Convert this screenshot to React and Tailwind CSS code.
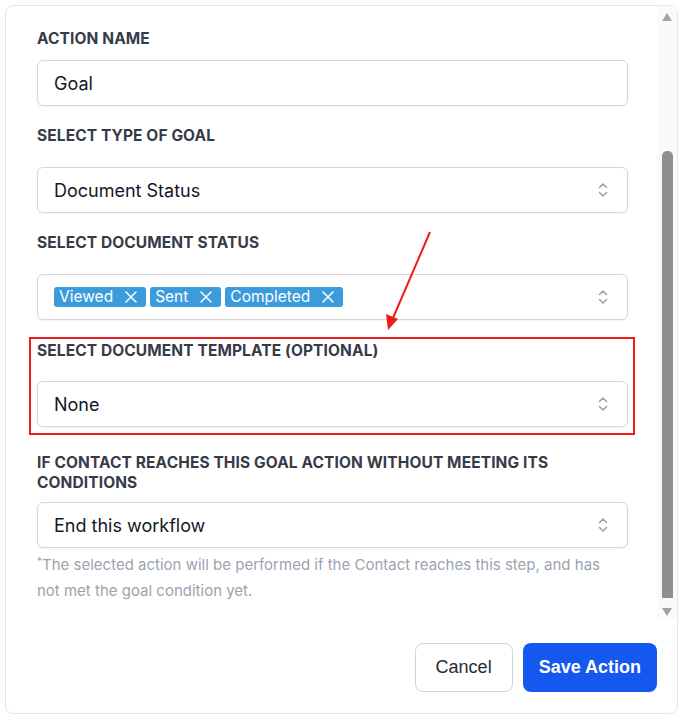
import React from "react";

function Chevrons() {
  return (
    <svg width="12" height="18" viewBox="0 0 12 18" fill="none" stroke="#9ca3af" strokeWidth="1.6" strokeLinecap="round" strokeLinejoin="round">
      <path d="M2.5 6.5 L6 3 L9.5 6.5" />
      <path d="M2.5 11.5 L6 15 L9.5 11.5" />
    </svg>
  );
}

function Label({ children, gap = "mb-[11px]" }) {
  return (
    <div className={`text-[15.5px] leading-[20px] font-bold uppercase text-[#353c48] tracking-[0.1px] ${gap}`}>
      {children}
    </div>
  );
}

function Select({ children }) {
  return (
    <div className="h-[46px] w-full flex items-center justify-between pl-4 pr-[18px] border border-[#d4d7dc] rounded-md bg-white shadow-[0_1px_2px_rgba(0,0,0,0.05)]">
      <div className="flex items-center gap-[4px] text-[18px] text-[#111827]">{children}</div>
      <Chevrons />
    </div>
  );
}

function Tag({ children }) {
  return (
    <span className="flex items-center h-[20px] pl-[5px] pr-[9px] gap-[12px] rounded-[3px] bg-[#3b9bdb] text-white text-[15.5px] leading-none">
      {children}
      <svg width="12" height="12" viewBox="0 0 12 12" stroke="white" strokeWidth="1.5" strokeLinecap="round">
        <path d="M1 1 L11 11 M11 1 L1 11" />
      </svg>
    </span>
  );
}

export default function App() {
  return (
    <div className="w-[685px] h-[719px] bg-white p-[5px] pr-[7px]" style={{ fontFamily: "Inter, 'Liberation Sans', sans-serif" }}>
      <div className="h-full flex flex-col border border-[#e5e7eb] rounded-lg">
        <div className="flex h-[614px]">
          <div className="flex-1 pl-[31px] pr-[29px] pt-[23px] overflow-hidden">
            <Label>Action name</Label>
            <div className="h-[46px] w-full flex items-center px-4 border border-[#d4d7dc] rounded-md shadow-[0_1px_2px_rgba(0,0,0,0.05)] text-[18px] text-[#111827] mb-[20px]">
              Goal
            </div>

            <Label gap="mb-[21px]">Select type of goal</Label>
            <div className="mb-[20px]">
              <Select>Document Status</Select>
            </div>

            <Label gap="mb-[21px]">Select document status</Label>
            <div className="mb-[21px]">
              <Select>
                <Tag>Viewed</Tag>
                <Tag>Sent</Tag>
                <Tag>Completed</Tag>
              </Select>
            </div>

            <div className="relative mb-[26px]">
              <Label gap="mb-[20px]">Select document template (optional)</Label>
              <Select>None</Select>
              <div className="absolute left-[-8px] right-[-7px] top-[-4px] bottom-[-8px] border-2 border-[#ee1c1c]"></div>
              <svg className="absolute left-[313px] top-[-113px]" width="100" height="110" viewBox="0 0 100 110">
                <line x1="80" y1="4" x2="43" y2="90" stroke="#ee1c1c" strokeWidth="2" />
                <polygon points="38,102 36,86 48,91" fill="#ee1c1c" />
              </svg>
            </div>

            <div className="text-[15.5px] leading-[19.5px] font-bold uppercase text-[#353c48] tracking-[0.1px] mb-[10px] pr-10">
              If contact reaches this goal action without meeting its conditions
            </div>
            <Select>End this workflow</Select>
            <p className="text-[15px] leading-[26px] text-[#9ca3af] mt-[4px] pr-[20px]">
              <span className="text-[10px] align-top leading-[18px]">*</span>The selected action will be performed if the Contact reaches this step, and has not met the goal condition yet.
            </p>
          </div>
          <div className="w-[20px] flex flex-col items-center bg-[#fafafa]">
            <svg className="mt-[7px]" width="10" height="8" viewBox="0 0 10 8">
              <polygon points="5,0 10,8 0,8" fill="#a3a3a3" />
            </svg>
            <div className="flex-1 w-full flex flex-col items-center pt-[130px] pb-[10px]">
              <div className="w-[11px] flex-1 bg-[#8f8f8f] rounded-t-[5px]"></div>
            </div>
            <svg className="mb-[4px]" width="10" height="8" viewBox="0 0 10 8">
              <polygon points="0,0 10,0 5,8" fill="#a3a3a3" />
            </svg>
          </div>
        </div>
        <div className="flex-1 flex justify-end items-center gap-[10px] pr-[20px] pt-[2px]">
          <button className="h-[49px] px-[20px] rounded-lg border border-[#d1d5db] bg-white text-[18px] text-[#1f2937]" style={{ fontFamily: "'Liberation Sans', Arial, sans-serif" }}>
            Cancel
          </button>
          <button className="h-[49px] px-[16px] rounded-lg bg-[#1558f0] text-white text-[18px] font-semibold" style={{ fontFamily: "'Liberation Sans', Arial, sans-serif" }}>
            Save Action
          </button>
        </div>
      </div>
    </div>
  );
}
